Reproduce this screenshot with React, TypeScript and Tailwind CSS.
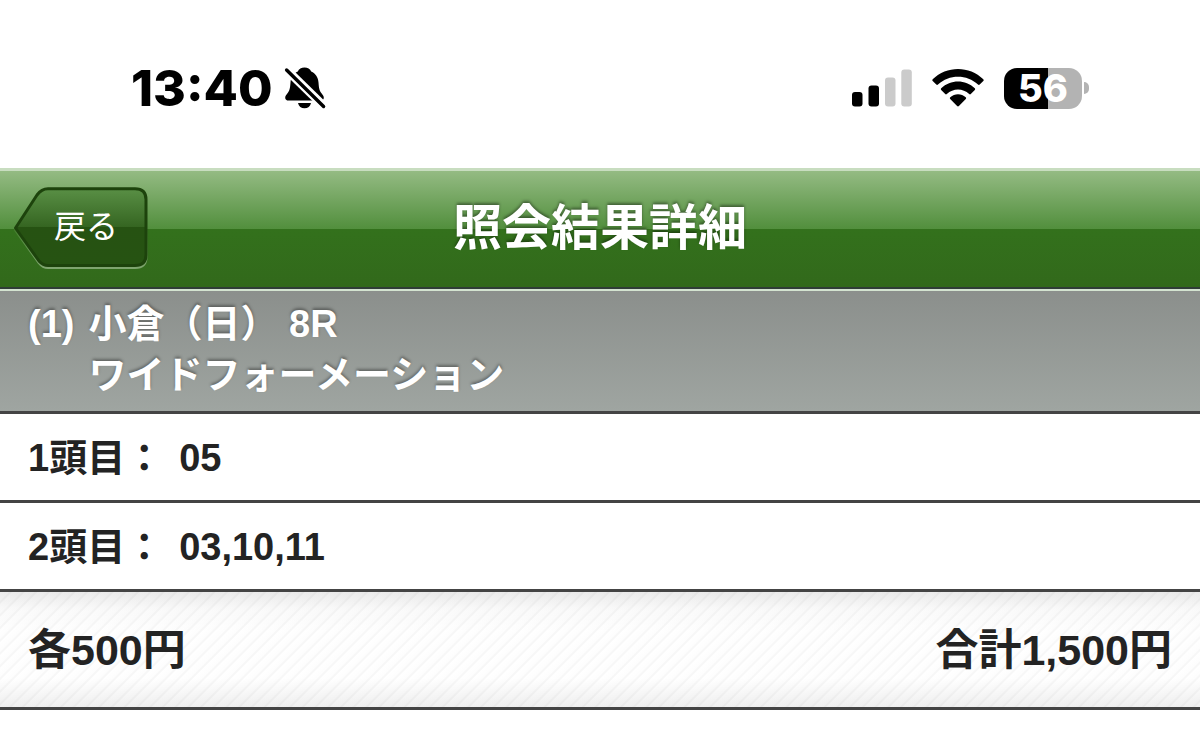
const rows = [
  { label: '1頭目：', value: '05' },
  { label: '2頭目：', value: '03,10,11' },
];

function MutedBell() {
  return (
    <svg className="h-11 w-11" viewBox="0 0 44 44" aria-label="消音" role="img">
      <path
        d="M21.500 1.500c-3.200 0-5.600 1.500-6.700 4.100-4.300 1.900-6.900 5.900-7.300 10.900-.4 6-.9 8-3 10.800-1.300 1.700-2.300 2.900-2.300 4.400 0 1.800 1.300 2.900 3.400 2.900h31.800c2.100 0 3.400-1.100 3.400-2.900 0-1.500-1-2.700-2.300-4.400-2.100-2.800-2.600-4.800-3-10.800-.4-5-3-9-7.300-10.900-1.100-2.600-3.500-4.100-6.700-4.100z"
      />
      <path d="M15 37h13c-.7 3.400-3.200 5.300-6.500 5.300s-5.800-1.900-6.500-5.300z" />
      <path d="M0 .2l44 43" stroke="#fff" strokeWidth="8.500" />
      <path d="M3.600 4l37 36.500" stroke="#000" strokeWidth="3.400" strokeLinecap="round" />
    </svg>
  );
}

function Signal() {
  return (
    <svg className="h-10 w-15" viewBox="0 0 60 40" aria-label="電波" role="img">
      <rect x="0" y="24" width="10.500" height="14.500" rx="3" />
      <rect x="16.500" y="17.500" width="10.500" height="21" rx="3" />
      <rect x="33" y="9.500" width="10.500" height="29" rx="3" fill="#cbcbcb" />
      <rect x="49.300" y="1.500" width="10.500" height="37" rx="3" fill="#cbcbcb" />
    </svg>
  );
}

function Wifi() {
  return (
    <svg className="h-10 w-13" viewBox="0 0 52 40" aria-label="Wi-Fi" role="img">
      <path d="M.7 11.300C14.500-2.500 37.500-2.500 51.300 11.300c.5.500.5 1.200 0 1.700l-3.600 3.600c-.5.500-1.200.5-1.700 0-11-10.600-29-10.600-40 0-.5.500-1.200.5-1.700 0L.7 13c-.5-.5-.5-1.200 0-1.700z" />
      <path d="M9.200 20.300c9.300-9 24.300-9 33.600 0 .5.500.5 1.200 0 1.700l-4 4c-.5.500-1.100.5-1.600 0-6.300-6-16.100-6-22.400 0-.5.500-1.100.5-1.600 0l-4-4c-.5-.5-.5-1.200 0-1.700z" />
      <path d="M18.300 29.300c4.400-4 11-4 15.400 0 .6.500.6 1.200.1 1.700l-6.900 7c-.5.500-1.300.5-1.800 0l-6.900-7c-.5-.5-.5-1.200.1-1.700z" />
    </svg>
  );
}

function Battery() {
  return (
    <div className="flex items-center gap-[2px]">
      <div className="flex h-[41px] w-[78px] items-center justify-center rounded-[13px] bg-[linear-gradient(to_right,#000_56%,#b3b3b3_56%)] text-[38px] leading-none font-extrabold text-white">
        56
      </div>
      <div className="h-3 w-[5px] rounded-r-full bg-[#b3b3b3]" />
    </div>
  );
}

function BackButton() {
  return (
    <button type="button" className="relative flex h-21 w-34 items-center justify-center pb-2 pl-[10px] text-[32px] leading-none text-white">
      <svg className="absolute inset-0 h-full w-full" viewBox="0 0 136 84" aria-hidden="true">
        <defs>
          <linearGradient id="back-fill" x1="0" y1="0" x2="0" y2="1">
            <stop offset="0" stopColor="#598f45" />
            <stop offset="0.5" stopColor="#356521" />
            <stop offset="0.5" stopColor="#265212" />
            <stop offset="1" stopColor="#265312" />
          </linearGradient>
          <linearGradient id="back-edge" x1="0" y1="0" x2="0" y2="1">
            <stop offset="0.4" stopColor="#8fbd7c" stopOpacity="0" />
            <stop offset="1" stopColor="#7fa56f" />
          </linearGradient>
        </defs>
        <path
          d="M2.500 44L24 10.500Q28.500 4.500 35 4.500H122Q133 4.500 133 15V71Q133 81.500 122 81.500H35Q30 81.500 26 76.500Z"
          fill="none"
          stroke="url(#back-edge)"
          strokeWidth="3"
        />
        <path
          d="M2.500 42L24 9Q28.500 2.800 35 2.800H122Q133 2.800 133 13.500V69Q133 79.500 122 79.500H35Q30 79.500 26 75Z"
          fill="url(#back-fill)"
          stroke="#1d430c"
          strokeWidth="3"
          strokeLinejoin="round"
        />
      </svg>
      <span className="relative">戻る</span>
    </button>
  );
}

export default function App() {
  return (
    <div lang="ja" className="min-h-screen bg-white font-['Liberation_Sans','Noto_Sans_CJK_JP',sans-serif] text-[#232323]">
      <div className="flex h-42 items-center justify-between pt-2 pr-[111px] pl-[131px] font-['Inter',sans-serif] text-black">
        <div className="flex items-center gap-[10px]">
          <time className="text-[50px] leading-none font-extrabold">13:40</time>
          <MutedBell />
        </div>
        <div className="flex items-center gap-5">
          <Signal />
          <Wifi />
          <Battery />
        </div>
      </div>

      <header className="grid h-[123px] grid-cols-[1fr_auto_1fr] items-center border-t-3 border-b-2 border-t-[#c8ddc0] border-b-[#d3e3d0] bg-[linear-gradient(#94bb83_0%,#528f3d_49%,#33711c_49%,#32691b_98%,#303d37_98%)] px-[13px] pb-1 font-['Noto_Sans_CJK_JP',sans-serif]">
        <BackButton />
        <h1 className="pb-[10px] text-[49px] leading-none font-bold text-white [text-shadow:0_-2px_3px_rgba(0,0,0,0.4)]">照会結果詳細</h1>
      </header>

      <main>
        <h2 className="flex h-[123px] gap-[14px] border-b-3 border-[#444] bg-linear-to-b from-[#8b8f8c] to-[#9fa5a1] pt-2 pl-7 text-[38px] leading-[51px] font-bold text-white [text-shadow:0_-2px_3px_rgba(0,0,0,0.35)]">
          <span>(1)</span>
          <span>
            小倉（日） 8R
            <br />
            ワイドフォーメーション
          </span>
        </h2>
        <dl className="text-[38px] leading-[84px] font-bold">
          {rows.map((row) => (
            <div key={row.label} className="flex gap-4 border-b-3 border-[#444] px-7 pt-[2px]">
              <dt>{row.label}</dt>
              <dd>{row.value}</dd>
            </div>
          ))}
        </dl>
        <div className="flex h-[118px] items-center justify-between border-b-3 border-[#444] bg-[linear-gradient(rgba(0,0,0,0.08),rgba(0,0,0,0.02)_15%,transparent_35%,transparent_75%,rgba(0,0,0,0.06)),repeating-linear-gradient(135deg,#fff_0px,#fdfdfd_6px,#f7f7f7_7px,#f7f7f7_8px,#fff_9px)] px-7 pt-[2px] text-[43px] leading-none font-bold">
          <span>各500円</span>
          <span>合計1,500円</span>
        </div>
      </main>
    </div>
  );
}
